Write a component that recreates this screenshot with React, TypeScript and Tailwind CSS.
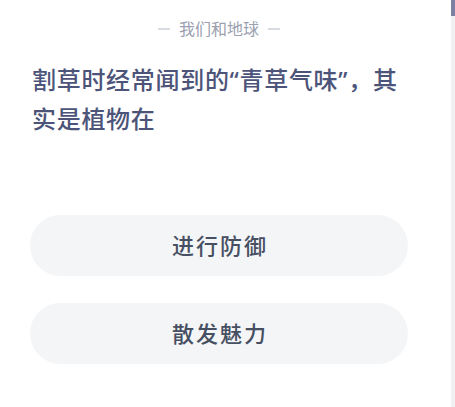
import React from "react";

export default function App() {
  const font = { fontFamily: '"Noto Sans", "Noto Sans CJK SC", sans-serif' };
  return (
    <div className="w-[455px] h-[407px] bg-white flex overflow-hidden" style={font}>
      <div className="flex-1 pl-[30px]">
        <div className="w-[378px] flex flex-col">
          <div className="mt-[19px] h-[20px] flex items-center justify-center gap-[9px]">
            <span className="w-[12px] h-[1.5px] bg-[#d9dbe2]" />
            <span className="text-[16px] leading-[20px] text-[#9b9fb0]">我们和地球</span>
            <span className="w-[12px] h-[1.5px] bg-[#d9dbe2]" />
          </div>
          <p className="mt-[21px] pl-[2px] text-[24px] leading-[39px] font-medium tracking-[0.7px] text-[#4c5479]">
            割草时经常闻到的“青草气味”，其实是植物在
          </p>
          <div className="mt-[77px] flex flex-col gap-[27px]">
            <div className="h-[61px] rounded-full bg-[#f4f5f7] flex items-center justify-center text-[22px] font-medium tracking-[2px] pl-[2px] text-[#474f62]">
              进行防御
            </div>
            <div className="h-[61px] rounded-full bg-[#f4f5f7] flex items-center justify-center text-[22px] font-medium tracking-[2px] pl-[2px] text-[#474f62]">
              散发魅力
            </div>
          </div>
        </div>
      </div>
      <div className="w-[4px] flex flex-col bg-[#f1f1f3]">
        <div className="h-[16px] bg-[#7d80a3]" />
      </div>
    </div>
  );
}
